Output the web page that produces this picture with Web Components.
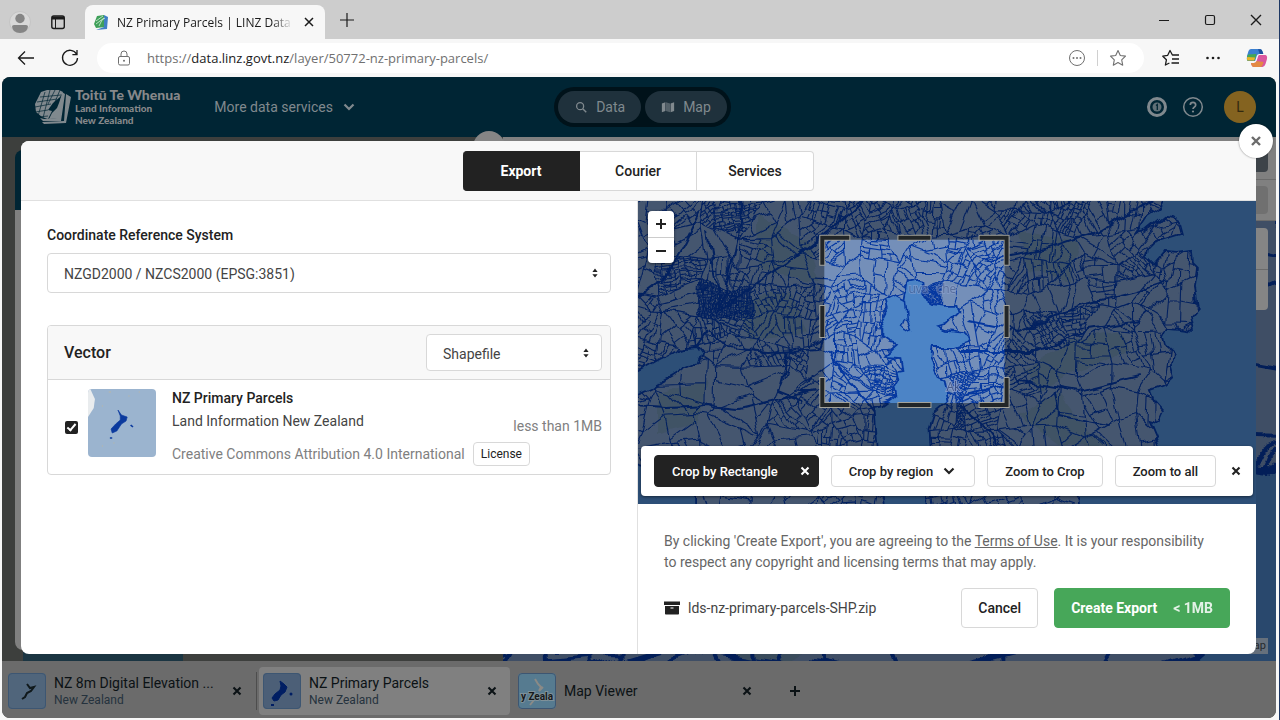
<!DOCTYPE html>
<html lang="en">
<head>
<meta charset="utf-8">
<title>NZ Primary Parcels | LINZ Data Service</title>
<style>
    html, body {
        margin: 0;
        height: 100%;
    }

    body {
        --ui: Roboto, "Open Sans", sans-serif;
        --chrome: "Open Sans", "Noto Sans", sans-serif;
        --ink: #222222;
        --line: #d8d8d8;
        --muted: #808080;
        --navy: #002534;
        font-family: var(--ui);
        font-size: 14px;
        color: var(--ink);
        overflow: hidden;
    }
</style>
</head>
<body>
<browser-window>
    <tab-strip slot="tabs">NZ Primary Parcels | LINZ Data Se</tab-strip>
    <address-bar slot="address" domain="data.linz.govt.nz" path="/layer/50772-nz-primary-parcels/"></address-bar>
    <data-page>
        <site-header slot="header"></site-header>
        <work-area slot="main"></work-area>
        <tab-dock slot="dock">
            <dock-tab heading="NZ 8m Digital Elevation ..." region="New Zealand" thumb="dem"></dock-tab>
            <dock-tab heading="NZ Primary Parcels" region="New Zealand" thumb="parcels" active></dock-tab>
            <dock-tab heading="Map Viewer" thumb="viewer"></dock-tab>
        </tab-dock>
        <export-dialog slot="dialog"></export-dialog>
    </data-page>
</browser-window>

<script>
// name: [size of the viewBox, markup]
const ICONS = {
    close: [16, `<path d="M4 4l8 8M12 4l-8 8" stroke="currentColor" stroke-width="2.4" fill="none"/>`],
    thin: [16, `<path d="M3 3l10 10M13 3L3 13" stroke="currentColor" stroke-width="1.4" fill="none"/>`],
    tabclose: [16, `<path d="M4 4l8 8M12 4l-8 8" stroke="currentColor" stroke-width="1.5" fill="none"/>`],
    plus: [16, `<path d="M8 3v10M3 8h10" stroke="currentColor" stroke-width="2" fill="none"/>`],
    minus: [16, `<path d="M3 8h10" stroke="currentColor" stroke-width="2" fill="none"/>`],
    newtab: [16, `<path d="M8 1v14M1 8h14" stroke="currentColor" stroke-width="1.2" fill="none"/>`],
    minimise: [16, `<path d="M3 8.5h10" stroke="currentColor" fill="none"/>`],
    maximise: [16, `<rect x="3.5" y="3.5" width="9" height="9" rx="1.5" stroke="currentColor" stroke-width="1.2" fill="none"/>`],
    chevron: [16, `<path d="M3.5 5.5L8 10l4.500-4.500" stroke="currentColor" stroke-width="2.200" fill="none"/>`],
    updown: [16, `<path d="M8 2l3.500 4.500h-7zM8 14l3.500-4.500h-7z" fill="currentColor"/>`],
    back: [18, `<path d="M17 9H1.500M8 2.500L1.500 9 8 15.500" stroke="currentColor" stroke-width="1.300" fill="none"/>`],
    reload: [18, `<path d="M15.600 5.200A7.500 7.500 0 1 0 16.500 9M16 1v4.600h-4.600" stroke="currentColor" stroke-width="1.300" fill="none"/>`],
    lock: [16, `<rect x="2.500" y="6.500" width="11" height="8.500" rx="1.500" stroke="currentColor" fill="none"/><path d="M5 6.500V4a3 3 0 0 1 6 0v2.500" stroke="currentColor" fill="none"/><circle cx="8" cy="10.800" r="1" fill="currentColor"/>`],
    person: [24, `<circle cx="12" cy="12" r="10.500" fill="#d8d8d8" stroke="#c4c4c4"/><circle cx="12" cy="8.500" r="4.700" fill="#858585"/><path d="M4 16.500q0-1.500 2-1.500h12q2 0 2 1.500-.5 6.500-8 6.500t-8-6.500z" fill="#858585"/>`],
    panels: [16, `<rect x="1.800" y="2" width="12.500" height="12.500" rx="2" stroke="currentColor" stroke-width="1.400" fill="none"/><path d="M2 4h12" stroke="currentColor" stroke-width="3"/><path d="M5.500 5v9" stroke="currentColor"/>`],
    reader: [18, `<circle cx="9" cy="9" r="7.500" stroke="currentColor" fill="none"/><circle cx="5.500" cy="9" r="1" fill="currentColor"/><circle cx="9" cy="9" r="1" fill="currentColor"/><circle cx="12.500" cy="9" r="1" fill="currentColor"/>`],
    star: [18, `<path d="M9 1.500l2.300 5 5.200.6-3.800 3.700 1 5.400L9 13.600l-4.700 2.600 1-5.400L1.500 7.100l5.200-.6z" stroke="currentColor" stroke-width="1.100" fill="none" stroke-linejoin="round"/>`],
    favourites: [18, `<path d="M10.600 6H10.400L8 1.500 5.700 6.300.8 7.200l3.600 3.600-1 5.200 4-2M10.500 6h6.500M10 10h7M9.500 14H17" stroke="currentColor" stroke-width="1.300" fill="none" stroke-linejoin="round"/>`],
    more: [18, `<circle cx="3.500" cy="9" r="1.300" fill="currentColor"/><circle cx="9" cy="9" r="1.300" fill="currentColor"/><circle cx="14.500" cy="9" r="1.300" fill="currentColor"/>`],
    copilot: [22, `<path d="M5 2h9q2 0 2.700 3l.6 2h-4q-2 0-2.600 2l-1.600 5H1.500Q.5 12 1 9l1.500-5Q3.300 2 5 2z" fill="#3b7fd0"/><path d="M2 7.500l8.500-.5-1.800 6.500H1.200q-.8-1 0-3.500z" fill="#45a853"/><path d="M1.200 10l8 .5-1 3H1.500q-1-1-.3-3.500z" fill="#e8b52a"/><path d="M12 2.200h2.500q1.500.3 2.200 2.800l.6 2h-3.500z" fill="#1d4f9c"/><path d="M13.500 8h6q2 .5 1.500 4l-1.500 5q-1 3-3 3H8q-2 0-2.500-2l-.5-2h3q2 0 2.600-2l1.600-5q.3-1 1.300-1z" fill="#d9579f"/><path d="M5 16h3q2 0 2.600-2l7 1-1 3q-.6 2-2 2H8q-2 0-2.500-2z" fill="#e38a44"/>`],
    search: [16, `<circle cx="7" cy="7" r="4" stroke="currentColor" stroke-width="1.500" fill="none"/><path d="M10 10l4 4" stroke="currentColor" stroke-width="1.700"/>`],
    map: [16, `<path d="M1 4l4-1.500v10L1 14zM11 4l4-1.500v10L11 14z" fill="currentColor"/><path d="M5.600 2.500l4.800 1.500v10l-4.800-1.500z" fill="currentColor" opacity=".55"/>`],
    notice: [22, `<circle cx="11" cy="11" r="8.500" stroke="currentColor" stroke-width="3" fill="none"/><circle cx="11" cy="11" r="4.500" fill="currentColor" opacity=".75"/><path d="M10 9.500l1.300-1V14" stroke="#002534" stroke-width="1.300" fill="none"/>`],
    help: [22, `<circle cx="11" cy="11" r="9.300" stroke="currentColor" stroke-width="1.500" fill="none"/><path d="M8.300 9q0-2.700 2.700-2.700T13.700 9q0 1.300-1.500 2.200-1.200.8-1.200 1.800" stroke="currentColor" stroke-width="1.700" fill="none"/><circle cx="11" cy="15.500" r="1.100" fill="currentColor"/>`],
    archive: [16, `<path d="M0 1.500h16V5H0zM1 6h14v7.700q0 .8-.8.800H1.800q-.8 0-.8-.8z" fill="currentColor"/><path d="M6.500 8h3" stroke="#ffffff"/>`],
    favicon: [16, `<path d="M4 2l7-1 1 12-9 1-2-4z" fill="#3fa05a"/><path d="M11 1l4 2-1 12-11 1 8-3z" fill="#3f7fc4"/><path d="M3 7l7-5M3 10l8-6M6 12l3-6 3-2" stroke="#d7efdc" stroke-width=".8" fill="none"/>`],
    linz: [36, `<path d="M12 1L24 1l4 2-3 5-7 6-5 7 4 1-4 8-6-2-6-5-1-8 6-12z" fill="currentColor"/><path d="M27 3l3 2-4 27H8l-3-3 4 1 13-1z" fill="currentColor"/><path d="M31 5l5 3-5 26-22 1-2-2 22-1z" fill="currentColor"/><path d="M26 8l2-1-3 22-11 1 3-6 5-5 2-5z" fill="currentColor"/><path d="M2 13l20-3M0 18l16-3M0 23l13-2M3 28l10-1M5 8l21-2M10 3L3 27M15 1L8 29M20 1l-7 14M25 1l-5 12" stroke="#002534" stroke-width=".7" fill="none"/>`],
};

class UiIcon extends HTMLElement {
    constructor() {
        super();
        this.attachShadow({mode: "open"});
    }

    connectedCallback() {
        const [box, markup] = ICONS[this.getAttribute("name")];
        const size = this.getAttribute("size") || box;
        this.shadowRoot.innerHTML = `
            <style>
                :host { display: inline-flex; flex: none; }
                svg { display: block; }
            </style>
            <svg width="${size}" height="${size}" viewBox="0 0 ${box} ${box}" aria-hidden="true">${markup}</svg>
        `;
    }
}

// Shared base: clone the class template into an open root
class BaseElement extends HTMLElement {
    constructor() {
        super();
        const template = document.createElement("template");
        template.innerHTML = this.constructor.markup;
        this.attachShadow({mode: "open"});
        this.shadowRoot.append(template.content.cloneNode(true));
    }
}

const resetButton = `
    button {
        font: inherit;
        color: inherit;
        padding: 0;
        border: 0;
        background: none;
        display: inline-flex;
        align-items: center;
        justify-content: center;
    }
`;

/* ---------- Browser ---------- */

class BrowserWindow extends BaseElement {
    static markup = `
        <style>
            :host {
                display: flex;
                flex-direction: column;
                height: 100vh;
                box-sizing: border-box;
                background: #f7f7f7;
                border-right: 1px solid #1d3763;
                font-family: var(--chrome);
            }
            main {
                flex: 1;
                min-height: 0;
                display: flex;
                margin: 0 3px 2px 2px;
                border-radius: 8px;
                overflow: hidden;
                font-family: var(--ui);
            }
        </style>
        <slot name="tabs"></slot>
        <slot name="address"></slot>
        <main><slot></slot></main>
    `;
}

class TabStrip extends BaseElement {
    static markup = `
        <style>
            ${resetButton}
            :host {
                display: flex;
                align-items: center;
                height: 39px;
                background: #cdcdcd;
                color: #1b1b1b;
                font-size: 12px;
            }
            .left { display: flex; align-items: center; gap: 18px; padding: 4px 19px 0 8px; }
            .tab {
                align-self: flex-end;
                box-sizing: border-box;
                width: 240px;
                height: 34px;
                padding: 0 8px;
                display: flex;
                align-items: center;
                gap: 8px;
                background: #f7f7f7;
                border-radius: 8px 8px 0 0;
            }
            .title {
                flex: 1;
                overflow: hidden;
                white-space: nowrap;
                mask-image: linear-gradient(to right, #000 88%, transparent);
            }
            .new { margin-left: 14px; }
            .window { margin-left: auto; display: flex; gap: 30px; padding-right: 15px; }
        </style>
        <div class="left">
            <button aria-label="Profile"><ui-icon name="person"></ui-icon></button>
            <button aria-label="Tab actions"><ui-icon name="panels"></ui-icon></button>
        </div>
        <div class="tab">
            <ui-icon name="favicon"></ui-icon>
            <span class="title"><slot></slot></span>
            <button aria-label="Close tab"><ui-icon name="tabclose"></ui-icon></button>
        </div>
        <button class="new" aria-label="New tab"><ui-icon name="newtab"></ui-icon></button>
        <div class="window">
            <button aria-label="Minimise"><ui-icon name="minimise"></ui-icon></button>
            <button aria-label="Maximise"><ui-icon name="maximise"></ui-icon></button>
            <button aria-label="Close"><ui-icon name="thin"></ui-icon></button>
        </div>
    `;
}

class AddressBar extends BaseElement {
    static markup = `
        <style>
            ${resetButton}
            :host {
                display: flex;
                align-items: center;
                height: 38px;
                padding: 0 11px 0 17px;
                color: #1b1b1b;
            }
            .pill {
                flex: 1;
                height: 30px;
                margin: 0 18px;
                padding: 0 17px 0 19px;
                display: flex;
                align-items: center;
                gap: 15px;
                background: #ffffff;
                border-radius: 16px;
                color: #707070;
            }
            .url { flex: 1; font-size: 13px; }
            .url b { font-weight: 400; color: #1b1b1b; }
            .nav { display: flex; gap: 26px; }
            .actions { display: flex; align-items: center; gap: 24px; }
            hr { width: 1px; height: 16px; margin: 0 -4px; border: 0; background: #d0d0d0; }
        </style>
        <div class="nav">
            <button aria-label="Back"><ui-icon name="back"></ui-icon></button>
            <button aria-label="Reload"><ui-icon name="reload"></ui-icon></button>
        </div>
        <div class="pill">
            <ui-icon name="lock"></ui-icon>
            <span class="url">https://<b></b><span class="path"></span></span>
            <button aria-label="Page info"><ui-icon name="reader"></ui-icon></button>
            <hr>
            <button aria-label="Add to favourites"><ui-icon name="star"></ui-icon></button>
        </div>
        <div class="actions">
            <button aria-label="Favourites"><ui-icon name="favourites"></ui-icon></button>
            <button aria-label="Settings"><ui-icon name="more"></ui-icon></button>
            <button aria-label="Copilot"><ui-icon name="copilot"></ui-icon></button>
        </div>
    `;

    connectedCallback() {
        this.shadowRoot.querySelector("b").textContent = this.getAttribute("domain");
        this.shadowRoot.querySelector(".path").textContent = this.getAttribute("path");
    }
}

/* ---------- Page behind the dialog ---------- */

class DataPage extends BaseElement {
    static markup = `
        <style>
            :host {
                flex: 1;
                min-width: 0;
                display: flex;
                flex-direction: column;
                position: relative;
                background: #3d3f3d;
            }
        </style>
        <slot name="header"></slot>
        <slot name="main"></slot>
        <slot name="dock"></slot>
        <slot name="dialog"></slot>
    `;
}

class SiteHeader extends BaseElement {
    static markup = `
        <style>
            ${resetButton}
            :host {
                display: grid;
                grid-template-columns: 1fr auto 1fr;
                align-items: center;
                height: 60px;
                padding: 0 20px 0 27px;
                background: var(--navy);
                color: #80898e;
            }
            .left { display: flex; align-items: center; padding-left: 6px; }
            .brand {
                margin: 0 34px 0 4px;
                display: flex;
                flex-direction: column;
                font: 900 10px/12px Lato, sans-serif;
                color: #86888a;
            }
            .brand strong { font-size: 14px; line-height: 14px; }
            .services { gap: 8px; }
            nav {
                display: flex;
                gap: 4px;
                padding: 4px;
                border-radius: 20px;
                background: #00121a;
            }
            nav button {
                height: 32px;
                padding: 0 16px;
                gap: 8px;
                border-radius: 16px;
                background: #1f313c;
            }
            .right { display: flex; align-items: center; justify-content: flex-end; gap: 14px; }
            .avatar {
                width: 32px;
                height: 32px;
                margin-left: 6px;
                border-radius: 50%;
                background: #846320;
                color: #33290f;
            }
        </style>
        <div class="left">
            <ui-icon name="linz"></ui-icon>
            <span class="brand"><strong>Toitū Te Whenua</strong><span>Land Information</span><span>New Zealand</span></span>
            <button class="services">More data services <ui-icon name="chevron"></ui-icon></button>
        </div>
        <nav>
            <button><ui-icon name="search" size="14"></ui-icon>Data</button>
            <button><ui-icon name="map" size="14"></ui-icon>Map</button>
        </nav>
        <div class="right">
            <button aria-label="Notices"><ui-icon name="notice"></ui-icon></button>
            <button aria-label="Help"><ui-icon name="help"></ui-icon></button>
            <button class="avatar">L</button>
        </div>
    `;
}

class WorkArea extends BaseElement {
    static markup = `
        <style>
            :host {
                flex: 1;
                min-height: 0;
                display: grid;
                grid-template-columns: 501px 1fr;
            }
            .side { display: flex; flex-direction: column; padding: 13px 0 0 13px; }
            .side header { height: 60px; background: var(--navy); border-radius: 8px 0 0; }
            .side section { flex: 1; background: #808080; border-radius: 0 0 0 8px; }
            .side footer { width: 160px; height: 11px; margin-left: 8px; background: #1b3542; }
            .main { display: flex; flex-direction: column; min-height: 0; position: relative; }
            .bar {
                height: 42px;
                display: flex;
                align-items: center;
                justify-content: flex-end;
                padding-right: 8px;
                background: #808080;
                border-bottom: 1px solid #6b6b6b;
            }
            .bar span { width: 40px; height: 28px; border-radius: 4px; background: #3d4349; }
            .bar + .bar span { background: #707070; }
            .bar + .bar { height: 40px; }
            .map { flex: 1; min-height: 0; display: grid; }
            .map > * { grid-area: 1 / 1; min-height: 0; }
            .zoom {
                justify-self: end;
                width: 26px;
                height: 82px;
                margin: 7px 8px 0 0;
                border-radius: 4px;
                background: linear-gradient(#858585 41px, #6b6b6b 41px, #6b6b6b 42px, #858585 42px);
            }
            .credit {
                place-self: end;
                margin: 0 8px 7px 0;
                padding: 0 2px;
                font-size: 11px;
                line-height: 16px;
                background: #66707c;
                color: #25292d;
            }
            /* The round handle on the edge between list and map */
            .knob {
                position: absolute;
                left: -30px;
                top: -6px;
                width: 32px;
                height: 32px;
                border-radius: 50%;
                background: #858585;
            }
        </style>
        <div class="side"><header></header><section></section><footer></footer></div>
        <div class="main">
            <span class="knob"></span>
            <div class="bar"><span></span></div>
            <div class="bar"><span></span></div>
            <div class="map">
                <parcel-map backdrop></parcel-map>
                <span class="zoom"></span>
                <span class="credit">Basemap</span>
            </div>
        </div>
    `;
}

class TabDock extends BaseElement {
    static markup = `
        <style>
            ${resetButton}
            :host {
                box-sizing: border-box;
                display: flex;
                align-items: center;
                gap: 4px;
                height: 57px;
                padding: 3px 0 0 2px;
                background: #6b6b6b;
                color: #0b1215;
            }
            button { margin-left: 18px; }
        </style>
        <slot></slot>
        <button aria-label="New tab"><ui-icon name="plus"></ui-icon></button>
    `;
}

const THUMBS = {
    dem: `<rect width="38" height="36" fill="#50657b"/><path d="M19 11l3 4 4-1-3 4-4 2-2 4-3 2" stroke="#10191c" stroke-width="2" fill="none"/>`,
    parcels: `<rect width="38" height="36" fill="#4c5f77"/><path d="M17 8l4 3 3 3-2 5-4 3-3 5-4 1-2-3 3-4 5-4 1-4z" fill="#001e63" stroke="#001e63"/><circle cx="28" cy="21" r="1.500" fill="#001e63"/><path d="M8 32h3" stroke="#001e63" stroke-width="2"/>`,
    viewer: `<rect width="38" height="36" fill="#567b90"/><path d="M17 6l3 5 3 3-2 4 4-4M12 32l4-5" stroke="#8b8a86" stroke-width="2" fill="none"/><text x="19" y="27" text-anchor="middle" font-family="Roboto, sans-serif" font-weight="700" font-size="10" fill="#16191b" stroke="#7f9199" stroke-width="2" paint-order="stroke">y Zeala</text>`,
};

class DockTab extends BaseElement {
    static markup = `
        <style>
            ${resetButton}
            :host {
                box-sizing: border-box;
                display: flex;
                align-items: center;
                gap: 8px;
                width: 251px;
                height: 48px;
                padding: 0 11px 0 4px;
                border-radius: 4px;
                position: relative;
            }
            :host([active]) { background: #808080; }
            :host(:first-of-type)::after {
                content: "";
                width: 1px;
                height: 38px;
                position: absolute;
                right: -2px;
                background: #4d4d4d;
            }
            svg { flex: none; border-radius: 4px; outline: 1px solid #3d5672; outline-offset: -1px; }
            .text { flex: 1; min-width: 0; display: flex; flex-direction: column; }
            .text span { overflow: hidden; white-space: nowrap; text-overflow: ellipsis; line-height: 17px; }
            .text .region { font-size: 12px; line-height: 16px; color: #25323d; }
            .region:empty { display: none; }
        </style>
        <svg width="38" height="36" viewBox="0 0 38 36"></svg>
        <div class="text"><span class="heading"></span><span class="region"></span></div>
        <button aria-label="Close"><ui-icon name="close" size="14"></ui-icon></button>
    `;

    connectedCallback() {
        this.shadowRoot.querySelector("svg").innerHTML = THUMBS[this.getAttribute("thumb")];
        this.shadowRoot.querySelector(".heading").textContent = this.getAttribute("heading");
        this.shadowRoot.querySelector(".region").textContent = this.getAttribute("region") || "";
    }
}

/* ---------- Parcel map ---------- */

const HARBOUR = "M269 81L278 79 287 81 288 94 291 102 304 104 317 104 319 112 307 124 300 126 308 130 325 132 330 142 316 147 292 147 291 157 295 166 300 176 306 179 310 201 297 212 292 228 293 244 289 262 290 310 247 310 240 270 238 244 235 206 246 204 257 196 255 188 260 179 258 170 264 169 262 157 247 156 260 144 249 142 242 137 242 127 250 112 247 99 257 94 266 99z";
const OCEAN = "M529 -5L521 8 509 16 498 33 508 30 525 16 533 17 540 21 543 32 530 36 515 41 508 48 507 56 515 64 525 52 538 53 552 51 553 60 559 66 556 86 559 106 552 114 555 129 540 127 529 126 524 136 526 145 534 152 532 165 535 176 526 184 512 189 516 199 525 209 520 221 509 218 520 244 500 262 470 275 440 290 442 310 640 310 640 -5z";
const LAKE = "M-5 173L20 159 36 151 50 146 58 145 63 152 60 162 46 168 33 176 15 186 -5 195z";
const SPIT = "M267 99L269 120M266 119l3 2 3 7-5 2-4-3z";
const ROADS = "M-5 100L25 78 45 45 62 10M82 110L95 60 103 20 100 -5M82 110L110 88 150 62 190 30 230 -5M70 128L55 150M72 130L90 148 130 152 180 148 190 120M-5 205L30 207 70 205 100 208 150 196 175 190M84 110L75 70 70 30M150 150L140 190 165 200M190 150L235 210M330 120L380 130 440 105 500 90 530 80M320 150L400 150 450 128 500 120M330 195L380 180 440 190 500 175M345 60L400 50 460 30 510 0M320 205L345 225 360 245M415 190L420 215 470 225";

// [x, y, radius, parcel size]
const TOWNS = [
    [84, 103, 20, 8], [76, 110, 34, 50], [76, 14, 26, 30], [50, 65, 16, 34], [140, 158, 22, 70],
    [240, 8, 40, 90], [210, 120, 40, 100], [303, 95, 14, 8], [325, 190, 22, 14], [250, 190, 15, 24],
    [305, 147, 12, 16], [276, 70, 10, 12], [430, 10, 28, 50], [428, 125, 24, 40], [200, 210, 50, 110],
    [505, 62, 20, 50], [340, 225, 40, 80], [380, 160, 25, 90], [335, 60, 30, 80],
];

class ParcelMap extends HTMLElement {
    constructor() {
        super();
        this.attachShadow({mode: "open"});

        this.seed = 77;
        this.rand = () => {
            this.seed = (this.seed * 16807) % 2147483647;
            return this.seed / 2147483647;
        };

        // The part of a polygon on one side of the line a*x + b*y = c
        this.clip = (poly, a, b, c) => {
            const out = [];
            poly.forEach((p, i) => {
                const q = poly[(i + 1) % poly.length];
                const dp = a * p[0] + b * p[1] - c;
                const dq = a * q[0] + b * q[1] - c;
                if (dp <= 0) out.push(p);
                if (dp * dq < 0) {
                    const t = dp / (dp - dq);
                    out.push([p[0] + (q[0] - p[0]) * t, p[1] + (q[1] - p[1]) * t]);
                }
            });
            return out;
        };

        this.area = (poly) => Math.abs(poly.reduce((sum, p, i) => {
            const q = poly[(i + 1) % poly.length];
            return sum + p[0] * q[1] - q[0] * p[1];
        }, 0)) / 2;

        // Cuts follow the block's own grid (bearing) or its right angle, favouring long strips
        this.split = (poly, target, bearing, out) => {
            if (poly.length < 3 || this.area(poly) < target * (0.6 + this.rand() * 0.8)) {
                out.push(poly);
                return;
            }
            const cx = poly.reduce((s, p) => s + p[0], 0) / poly.length;
            const cy = poly.reduce((s, p) => s + p[1], 0) / poly.length;
            const extent = (angle) => {
                const d = poly.map((p) => p[0] * Math.cos(angle) + p[1] * Math.sin(angle));
                return Math.max(...d) - Math.min(...d);
            };
            const along = extent(bearing);
            const across = extent(bearing + Math.PI / 2);
            let angle = along * 1.7 > across ? bearing : bearing + Math.PI / 2;
            angle += (this.rand() - 0.5) * 0.25;
            const a = Math.cos(angle);
            const b = Math.sin(angle);
            const c = a * cx + b * cy + (this.rand() - 0.5) * Math.min(along, across) * 0.4;
            this.split(this.clip(poly, a, b, c), target, bearing, out);
            this.split(this.clip(poly, -a, -b, -c), target, bearing, out);
        };

        this.parcels = () => {
            const out = [];
            const step = 28;
            const nodes = {};
            const node = (i, j) => nodes[`${i},${j}`] ??= [
                i * step + (this.rand() - 0.5) * 26,
                j * step + (this.rand() - 0.5) * 26,
            ];
            for (let j = -1; j < 12; j++) {
                for (let i = -1; i < 24; i++) {
                    const block = [node(i, j), node(i + 1, j), node(i + 1, j + 1), node(i, j + 1)];
                    const [x, y] = [(i + 0.5) * step, (j + 0.5) * step];
                    let target = 70 + this.rand() ** 2 * 560;
                    if (x < 180 && y > 180) target = 600;
                    if (x > 400 && y > 130) target += 180;
                    TOWNS.forEach(([tx, ty, r, size]) => {
                        if (Math.hypot(x - tx, y - ty) < r) target = Math.min(target, size);
                    });
                    this.split(block, target, this.rand() * Math.PI, out);
                }
            }
            return out.map((p) => "M" + p.map((q) => `${q[0].toFixed(1)} ${q[1].toFixed(1)}`).join("L") + "z").join("");
        };
    }

    connectedCallback() {
        const backdrop = this.hasAttribute("backdrop");
        const corner = (x, y, sx, sy) => `<path d="M${x} ${y + 25 * sy}V${y}H${x + 25 * sx}"/>`;
        const handles = `
            ${corner(184, 37, 1, 1)}${corner(368, 37, -1, 1)}${corner(184, 204, 1, -1)}${corner(368, 204, -1, -1)}
            <path d="M262 37h28M262 204h28M184 107v27M368 107v27"/>
        `;
        const crop = `
            <path d="M-50 -50H700V400H-50zM186 39V202H366V39z" fill="#000000" fill-opacity=".4" fill-rule="evenodd"/>
            <g fill="none" stroke="#a3a39c" stroke-width="6" stroke-linecap="square">${handles}</g>
            <g fill="none" stroke="#222628" stroke-width="4" stroke-linecap="square">${handles}</g>
        `;
        const shade = `<path d="M-50 -50H700V400H-50z" fill="#000000" fill-opacity=".45"/>`;
        this.shadowRoot.innerHTML = `
            <style>
                :host { display: block; overflow: hidden; }
                svg { display: block; width: 100%; height: 100%; }
                text { font: 12px "Open Sans", sans-serif; fill: #3f5080; stroke: #90a3cf; stroke-width: 2px; paint-order: stroke; }
            </style>
            <svg viewBox="${backdrop ? "330 60 220 125" : "0 0 617 303"}" preserveAspectRatio="xMidYMid slice" role="img" aria-label="Parcel map">
                <filter id="rough" filterUnits="userSpaceOnUse" x="-20" y="-20" width="680" height="350" color-interpolation-filters="sRGB">
                    <feTurbulence type="fractalNoise" baseFrequency=".05" numOctaves="2" seed="4"/>
                    <feDisplacementMap in="SourceGraphic" scale="11" xChannelSelector="R" yChannelSelector="G"/>
                </filter>
                <g filter="url(#rough)">
                    <path d="M-20 -20H660V330H-20z" fill="#748fb9"/>
                    <g fill="#6b8aa8">
                        <path d="M385 170L430 140 480 130 490 150 440 170 400 190z"/>
                        <path d="M380 215L420 190 450 230 470 244 420 244z"/>
                        <path d="M120 15L170 40 180 80 120 70zM20 190L70 180 60 220 20 230zM380 30L440 40 430 80 390 70zM100 100L150 90 170 130 110 140z"/>
                    </g>
                    <g fill="none" stroke="#0437a0" stroke-linejoin="round">
                        <path d="${this.parcels()}" stroke-width="1.100"/>
                        <path d="${ROADS}" stroke-width="2"/>
                    </g>
                    <g fill="#4c84c6" stroke="#0437a0" stroke-width="1.800">
                        <path d="${HARBOUR}"/><path d="${OCEAN}"/><path d="${LAKE}"/>
                        <path d="M-5 262L30 272 58 292 58 310H-5z"/>
                    </g>
                    <path d="${SPIT}" fill="#748fb9" stroke="#0437a0" stroke-width="1.500"/>
                </g>
                ${backdrop ? "" : `<text x="270" y="92" opacity=".5">uva</text><text x="298" y="92" opacity=".5">che</text><text x="308" y="190" opacity=".8">Ak</text>`}
                ${backdrop ? shade : crop}
            </svg>
        `;
    }
}

/* ---------- Export dialog ---------- */

class UiButton extends BaseElement {
    static markup = `
        <style>
            ${resetButton}
            :host { display: inline-flex; }
            button {
                box-sizing: border-box;
                height: var(--height, 32px);
                padding: 0 var(--pad, 16px);
                gap: 8px;
                border: 1px solid var(--line);
                border-radius: 4px;
                background: #ffffff;
                white-space: nowrap;
                font-size: var(--size, 14px);
                font-weight: var(--weight, 500);
            }
            :host([kind="dark"]) button { background: #222222; border-color: #222222; color: #ffffff; }
            :host([kind="go"]) button { background: #47a759; border-color: #47a759; color: #ffffff; gap: 16px; font-weight: 700; }
        </style>
        <button><slot></slot></button>
    `;
}

class SelectBox extends BaseElement {
    static markup = `
        <style>
            :host { display: grid; align-items: center; }
            label { grid-area: 1 / 1; margin-bottom: 8px; font-weight: 500; line-height: 20px; }
            select {
                grid-area: 2 / 1;
                appearance: none;
                width: 100%;
                height: var(--height, 40px);
                padding: 2px 16px 0;
                border: 1px solid var(--line);
                border-radius: 4px;
                background: #ffffff;
                color: #444444;
                font: inherit;
            }
            ui-icon { grid-area: 2 / 1; justify-self: end; margin-right: 10px; pointer-events: none; }
        </style>
        <label for="box"></label>
        <select id="box"><option></option></select>
        <ui-icon name="updown" size="12"></ui-icon>
    `;

    connectedCallback() {
        const label = this.shadowRoot.querySelector("label");
        if (this.hasAttribute("label")) {
            label.textContent = this.getAttribute("label");
        } else {
            label.remove();
            this.shadowRoot.querySelector("select").setAttribute("aria-label", "Format");
        }
        this.shadowRoot.querySelector("option").textContent = this.getAttribute("value");
    }
}

class LayerCard extends BaseElement {
    static markup = `
        <style>
            :host { display: block; border: 1px solid var(--line); border-radius: 4px; overflow: hidden; }
            header {
                display: flex;
                align-items: center;
                justify-content: space-between;
                height: 53px;
                padding: 0 8px 0 16px;
                background: #f8f8f8;
                border-bottom: 1px solid var(--line);
            }
            h2 { margin: 0; font-size: 16px; font-weight: 500; line-height: 22px; }
            select-box { width: 176px; --height: 37px; }
            .row {
                display: grid;
                grid-template-columns: auto auto 1fr;
                align-items: start;
                padding: 9px 8px 8px 17px;
            }
            input { appearance: none; width: 13px; height: 13px; margin: 32px 10px 0 0; border-radius: 2px; background: #222222; display: grid; }
            input:checked::after { content: ""; width: 3px; height: 7px; margin: 1px 0 0 4px; border: solid #ffffff; border-width: 0 2px 2px 0; transform: rotate(40deg); }
            .thumb { border-radius: 4px; margin-right: 16px; }
            .info { grid-area: 1 / 3; display: flex; flex-direction: column; line-height: 23px; margin-top: -2px; white-space: nowrap; }
            label { font-weight: 500; }
            .licence { display: flex; align-items: center; gap: 8px; margin-top: 9px; color: var(--muted); line-height: 24px; }
            .licence ui-button { --height: 24px; --pad: 7px; --size: 12px; --weight: 400; color: var(--ink); }
            .size { grid-area: 1 / 3; justify-self: end; margin-top: 27px; color: var(--muted); line-height: 20px; }
            .info .owner { color: #444444; }
        </style>
        <header><h2>Vector</h2><select-box value="Shapefile"></select-box></header>
        <div class="row">
            <input type="checkbox" id="layer" checked>
            <svg class="thumb" width="68" height="68" viewBox="0 0 59 68" preserveAspectRatio="none">
                <rect width="59" height="68" fill="#9bb4cf"/>
                <path d="M0 0h2l4 10-1 9-5 9z" fill="#e9ecee"/>
                <path d="M26 21l3 5 5 2-1 4-4 3-4 7-4 2-1-4 4-5 4-4v-4z" fill="#0b3a9e" stroke="#0b3a9e" stroke-width=".6"/>
                <path d="M37 36l2 2M19 49h2" stroke="#0b3a9e" stroke-width="1.500"/>
                <path d="M18 3h2M35 7h1M12 17h1M22 54h1M12 57h1M44 3h1" stroke="#b9b6a6"/>
            </svg>
            <div class="info">
                <label for="layer">NZ Primary Parcels</label>
                <span class="owner">Land Information New Zealand</span>
                <span class="licence">Creative Commons Attribution 4.0 International <ui-button>License</ui-button></span>
            </div>
            <span class="size">less than 1MB</span>
        </div>
    `;
}

class CropMap extends BaseElement {
    static markup = `
        <style>
            ${resetButton}
            :host { display: grid; min-height: 0; }
            parcel-map { grid-area: 1 / 1; min-height: 0; }
            .zoom {
                grid-area: 1 / 1;
                place-self: start;
                z-index: 1;
                margin: 10px;
                display: flex;
                flex-direction: column;
                background: #ffffff;
                border-radius: 4px;
                box-shadow: 0 1px 3px #00000080;
            }
            .zoom button { width: 26px; height: 26px; }
            .zoom button + button { border-top: 1px solid #cccccc; }
            .tools {
                grid-area: 1 / 1;
                align-self: end;
                z-index: 1;
                margin: 0 3px 8px;
                height: 50px;
                padding: 0 10px 0 13px;
                display: flex;
                align-items: center;
                gap: 12px;
                background: #ffffff;
                border-radius: 4px;
                box-shadow: 0 1px 3px #00000080;
                --size: 13px;
                --pad: 17px;
            }
            .clear { margin: 0 -11px 0 12px; }
            .tools > button { margin-left: auto; }
        </style>
        <parcel-map></parcel-map>
        <div class="zoom">
            <button aria-label="Zoom in"><ui-icon name="plus"></ui-icon></button>
            <button aria-label="Zoom out"><ui-icon name="minus"></ui-icon></button>
        </div>
        <div class="tools">
            <ui-button kind="dark">Crop by Rectangle <ui-icon class="clear" name="close" size="14"></ui-icon></ui-button>
            <ui-button>Crop by region <ui-icon name="chevron"></ui-icon></ui-button>
            <ui-button>Zoom to Crop</ui-button>
            <ui-button>Zoom to all</ui-button>
            <button aria-label="Close tools"><ui-icon name="close" size="14"></ui-icon></button>
        </div>
    `;
}

class ExportDialog extends BaseElement {
    static markup = `
        <style>
            ${resetButton}
            :host {
                position: absolute;
                inset: 64px 20px 64px 19px;
                display: grid;
                grid-template-rows: auto 1fr;
                background: #ffffff;
                border-radius: 8px;
            }
            nav {
                display: flex;
                justify-content: center;
                padding: 10px;
                height: 39px;
                background: #f8f8f8;
                border-bottom: 1px solid #e0e0e0;
                border-radius: 8px 8px 0 0;
            }
            nav button {
                box-sizing: border-box;
                width: 117px;
                height: 40px;
                background: #ffffff;
                border: solid var(--line);
                border-width: 1px 1px 1px 0;
                font-weight: 500;
            }
            nav .on { background: #222222; border-color: #222222; color: #ffffff; border-radius: 4px 0 0 4px; font-weight: 700; }
            nav button:last-child { border-radius: 0 4px 4px 0; }
            .close {
                position: absolute;
                top: -17px;
                right: -17px;
                width: 34px;
                height: 34px;
                border-radius: 50%;
                background: #ffffff;
                color: #6b6b6b;
                box-shadow: 0 0 2px #00000080;
            }
            .body { display: grid; grid-template-columns: 617fr 618fr; min-height: 0; }
            .options {
                padding: 24px 26px;
                display: flex;
                flex-direction: column;
                gap: 32px;
                border-right: 1px solid #e0e0e0;
            }
            .output { display: flex; flex-direction: column; min-height: 0; }
            crop-map { flex: 1; }
            .confirm { padding: 27px 26px 26px; }
            p { margin: 0 12px 15px 0; line-height: 21px; color: #666666; }
            a { color: inherit; }
            .actions { display: flex; align-items: center; gap: 16px; --height: 40px; }
            .file { flex: 1; display: flex; align-items: center; gap: 8px; color: #444444; }
            .file ui-icon { color: var(--ink); }
            .size { opacity: .85; }
        </style>
        <nav>
            <button class="on">Export</button>
            <button>Courier</button>
            <button>Services</button>
        </nav>
        <div class="body">
            <section class="options">
                <select-box label="Coordinate Reference System" value="NZGD2000 / NZCS2000 (EPSG:3851)"></select-box>
                <layer-card></layer-card>
            </section>
            <section class="output">
                <crop-map></crop-map>
                <div class="confirm">
                    <p>By clicking 'Create Export', you are agreeing to the <a href="#terms">Terms of Use</a>. It is your responsibility to respect any copyright and licensing terms that may apply.</p>
                    <div class="actions">
                        <span class="file"><ui-icon name="archive"></ui-icon>lds-nz-primary-parcels-SHP.zip</span>
                        <ui-button>Cancel</ui-button>
                        <ui-button kind="go">Create Export <span class="size">&lt; 1MB</span></ui-button>
                    </div>
                </div>
            </section>
        </div>
        <button class="close" aria-label="Close"><ui-icon name="close"></ui-icon></button>
    `;
}

customElements.define("ui-icon", UiIcon);
customElements.define("ui-button", UiButton);
customElements.define("select-box", SelectBox);
customElements.define("browser-window", BrowserWindow);
customElements.define("tab-strip", TabStrip);
customElements.define("address-bar", AddressBar);
customElements.define("data-page", DataPage);
customElements.define("site-header", SiteHeader);
customElements.define("parcel-map", ParcelMap);
customElements.define("work-area", WorkArea);
customElements.define("tab-dock", TabDock);
customElements.define("dock-tab", DockTab);
customElements.define("layer-card", LayerCard);
customElements.define("crop-map", CropMap);
customElements.define("export-dialog", ExportDialog);
</script>
</body>
</html>
